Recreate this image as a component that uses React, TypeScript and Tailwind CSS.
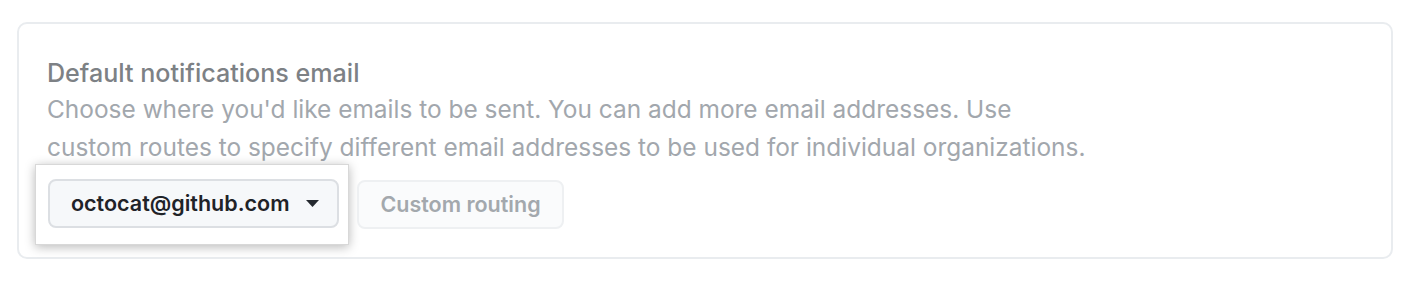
import React from "react";

export default function App() {
  return (
    <div
      className="w-[1417px] h-[283px] bg-white pl-[17px] pt-[22px]"
      style={{ fontFamily: "Inter, 'Noto Sans', sans-serif" }}
    >
      <div className="w-[1376px] h-[237px] rounded-[10px] border-2 border-[#e9ecef] pl-[28px] pt-[34px]">
        <div className="text-[25.1px] leading-[30px] font-medium text-[#7d8185]">
          Default notifications email
        </div>
        <div className="text-[24.45px] leading-[38px] text-[#a2a7ad] mt-[2px]">
          Choose where you'd like emails to be sent. You can add more email addresses. Use
          <br />
          custom routes to specify different email addresses to be used for individual organizations.
        </div>
        <div className="flex items-center mt-[-2px]">
          <div className="ml-[-12px] bg-white pl-[12px] pr-[9px] pt-[14px] pb-[16px] shadow-[0_2px_10px_rgba(0,0,0,0.28)] border border-[#d8d8d8]">
            <div className="w-[291px] h-[49px] rounded-[8px] border-2 border-[#dcdfe3] bg-[#f6f8fa] flex items-center pl-[21px]">
              <span className="text-[21.5px] font-semibold text-[#1f2328]">
                octocat@github.com
              </span>
              <svg width="13" height="7" viewBox="0 0 13 7" className="ml-[16px]">
                <path d="M0 0 L13 0 L6.5 7 Z" fill="#24292f" />
              </svg>
            </div>
          </div>
          <div className="ml-[8px] w-[207px] h-[49px] rounded-[8px] border-2 border-[#eef0f2] bg-[#fafbfc] flex items-center justify-center">
            <span className="text-[21.5px] font-semibold text-[#a3a8ad]">Custom routing</span>
          </div>
        </div>
      </div>
    </div>
  );
}
